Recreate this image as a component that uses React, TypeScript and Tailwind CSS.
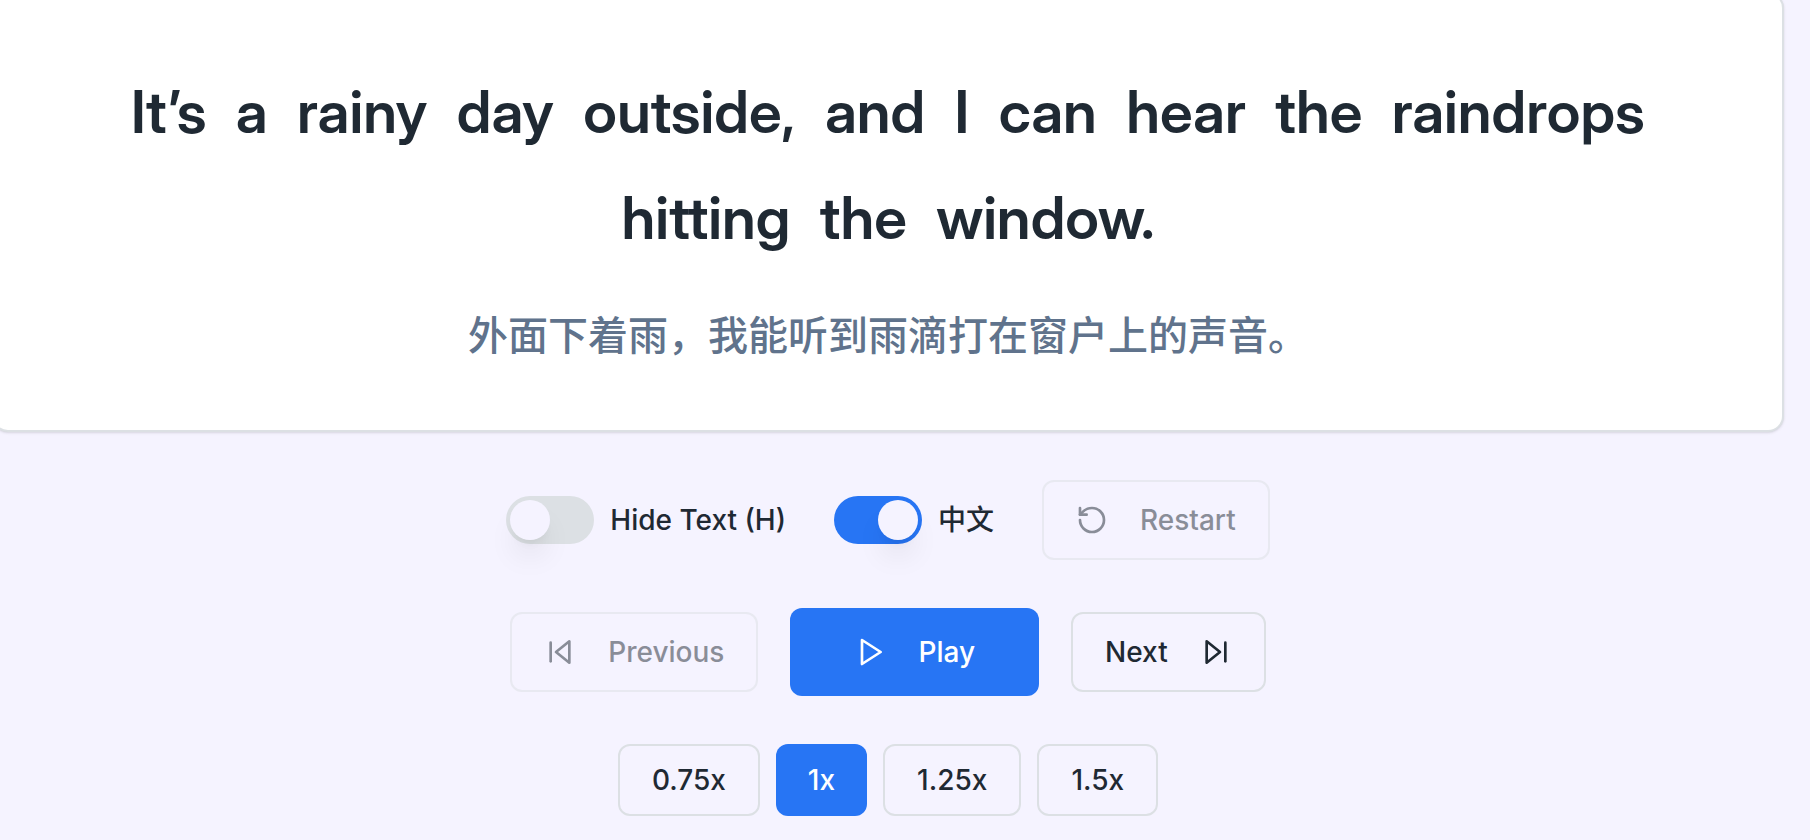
import { useState, type ReactNode } from "react";

const sentence = "It’s a rainy day outside, and I can hear the raindrops hitting the window.";
const translation = "外面下着雨，我能听到雨滴打在窗户上的声音。";
const speeds = [0.75, 1, 1.25, 1.5];

function Icon({ children }: { children: ReactNode }) {
  return (
    <svg
      viewBox="0 0 24 24"
      className="size-8 shrink-0"
      fill="none"
      stroke="currentColor"
      strokeWidth="2"
      strokeLinecap="round"
      strokeLinejoin="round"
      aria-hidden="true"
    >
      {children}
    </svg>
  );
}

type ToggleProps = {
  id: string;
  label: string;
  checked: boolean;
  onChange: (checked: boolean) => void;
};

function Toggle({ id, label, checked, onChange }: ToggleProps) {
  return (
    <div className="flex items-center gap-4">
      <input
        id={id}
        type="checkbox"
        checked={checked}
        onChange={(e) => onChange(e.target.checked)}
        className="h-12 w-22 shrink-0 cursor-pointer appearance-none rounded-full bg-[#dce0e4] p-1 before:block before:size-10 before:rounded-full before:bg-[#f5f3ff] before:shadow-[0_20px_30px_-6px_rgba(0,0,0,0.1),0_8px_12px_-8px_rgba(0,0,0,0.1)] before:transition-transform checked:bg-[#2775f4] checked:before:translate-x-10"
      />
      <label htmlFor={id} className="cursor-pointer leading-10">
        {label}
      </label>
    </div>
  );
}

const outline =
  "flex items-center justify-center rounded-xl border-2 border-[#dce0e4] px-8 disabled:opacity-50";

export default function App() {
  const [hidden, setHidden] = useState(false);
  const [chinese, setChinese] = useState(true);
  const [playing, setPlaying] = useState(false);
  const [speed, setSpeed] = useState(1);

  return (
    <div className="min-h-screen overflow-hidden bg-[#f5f3ff] font-['Inter','Noto_Sans_CJK_SC',sans-serif] text-[28px] font-medium leading-10 text-[#1f2933]">
      <main className="-mt-2 -ml-2 mr-[26px] flex flex-col items-center gap-12 pb-6">
        <section className="w-full rounded-2xl border-2 border-[#dce0e4] bg-white px-16 pt-[65px] pb-16 text-center shadow-sm">
          {!hidden && (
            <p className="font-['Inter_Display','Inter',sans-serif] text-[59px] font-[560] leading-[106px] [font-feature-settings:'calt'_0,'liga'_0]">
              {sentence.split(" ").map((word, i) => (
                <span key={i}>
                  <span className="inline-block px-2">{word}</span>{" "}
                </span>
              ))}
            </p>
          )}
          {chinese && (
            <p lang="zh-CN" className="mt-[35px] text-[40px] leading-[60px] text-[#60738c]">
              {translation}
            </p>
          )}
        </section>

        <div className="flex flex-wrap items-center justify-center gap-12">
          <Toggle id="hide-text" label="Hide Text (H)" checked={hidden} onChange={setHidden} />
          <Toggle id="chinese" label="中文" checked={chinese} onChange={setChinese} />
          <button type="button" disabled className={`${outline} h-20 gap-8`}>
            <Icon>
              <path d="M3 12a9 9 0 1 0 9-9 9.75 9.75 0 0 0-6.74 2.74L3 8" />
              <path d="M3 3v5h5" />
            </Icon>
            Restart
          </button>
        </div>

        <div className="flex flex-wrap items-center justify-center gap-8">
          <button type="button" disabled className={`${outline} h-20 gap-8`}>
            <Icon>
              <polygon points="19 20 9 12 19 4 19 20" />
              <line x1="5" x2="5" y1="19" y2="5" />
            </Icon>
            Previous
          </button>
          <button
            type="button"
            onClick={() => setPlaying(!playing)}
            className="flex h-22 items-center justify-center gap-8 rounded-xl bg-[#2775f4] px-16 text-white"
          >
            <Icon>
              {playing ? (
                <path d="M6 4h4v16H6zM14 4h4v16h-4z" />
              ) : (
                <polygon points="6 3 20 12 6 21 6 3" />
              )}
            </Icon>
            {playing ? "Pause" : "Play"}
          </button>
          <button type="button" className={`${outline} h-20 gap-8`}>
            Next
            <Icon>
              <polygon points="5 4 15 12 5 20 5 4" />
              <line x1="19" x2="19" y1="5" y2="19" />
            </Icon>
          </button>
        </div>

        <div className="flex flex-wrap items-center justify-center gap-4">
          {speeds.map((value) => (
            <button
              key={value}
              type="button"
              aria-pressed={value === speed}
              onClick={() => setSpeed(value)}
              className={
                value === speed
                  ? "h-18 rounded-xl bg-[#2775f4] px-8 text-white"
                  : `${outline} h-18`
              }
            >
              {value}x
            </button>
          ))}
        </div>
      </main>
    </div>
  );
}
